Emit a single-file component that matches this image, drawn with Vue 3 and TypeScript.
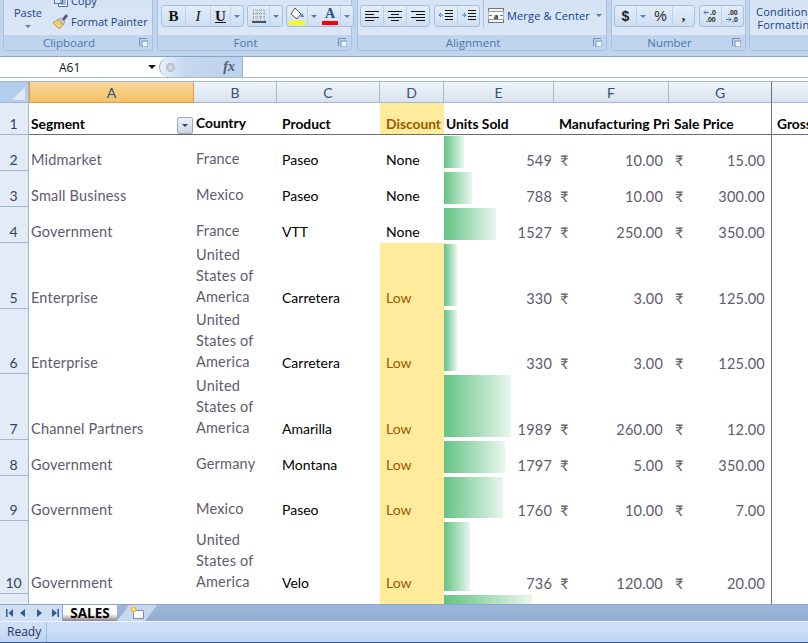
<template>
  <div class="sheet-app">
    <div class="ribbon">
      <section class="group clip">
        <div class="body clip-body">
          <div class="paste">
            <span>Paste</span>
            <i class="caret"></i>
          </div>
          <div class="clip-items">
            <div class="clip-item copy">
              <svg width="16" height="14" viewBox="0 0 16 14">
                <rect x="5.5" y="1.5" width="9" height="11" fill="#fff" stroke="#4a78b5" />
                <rect x="1.5" y="0.5" width="8" height="9" fill="#dfe9f7" stroke="#4a78b5" />
                <path d="M7 6h6M7 8h6M7 10h6" stroke="#4a78b5" />
              </svg>
              <span>Copy</span>
            </div>
            <div class="clip-item">
              <svg width="17" height="17" viewBox="0 0 17 17">
                <path d="M10 6l4-5 2 2-4 5z" fill="#5d4d8f" />
                <path d="M9 5l4 4-2 3-5-5z" fill="#c9c9c9" stroke="#777" stroke-width="0.5" />
                <path d="M6 6.500l5 5-3 4c-2.500-.5-6-4-7-6z" fill="#f3d06a" stroke="#8f7430" stroke-width="0.6" />
              </svg>
              <span>Format Painter</span>
            </div>
          </div>
        </div>
        <footer>Clipboard<Launcher /></footer>
      </section>

      <section class="group font">
        <div class="body tools">
          <div class="btns">
            <b class="tb serif w23">B</b>
            <i class="tb serif w24">I</i>
            <u class="tb serif w19 bold">U</u>
            <span class="tb drop"><i class="caret"></i></span>
          </div>
          <div class="btns">
            <span class="tb w21">
              <svg width="14" height="14" viewBox="0 0 14 14">
                <path d="M1 1h12M1 4.500h12M1 8h12M1.500 1v11M5 1v11M8.500 1v11M12.500 1v11" stroke="#9a9a9a" stroke-dasharray="1 1" />
                <path d="M0 13h14" stroke="#222" stroke-width="1.500" />
              </svg>
            </span>
            <span class="tb drop"><i class="caret"></i></span>
          </div>
          <div class="btns">
            <span class="tb w20">
              <svg width="16" height="19" viewBox="0 0 16 19">
                <path d="M6 1l6 6-4 5-6-5z" fill="#fff" stroke="#555" />
                <path d="M13 6l2 4h-3z" fill="#3f6fb5" />
                <rect y="14" width="16" height="4" fill="#ffff00" />
              </svg>
            </span>
            <span class="tb drop"><i class="caret"></i></span>
            <span class="tb w20 color-a">
              <b class="serif">A</b>
              <em class="bar"></em>
            </span>
            <span class="tb drop"><i class="caret"></i></span>
          </div>
        </div>
        <footer>Font<Launcher /></footer>
      </section>

      <section class="group align">
        <div class="body tools">
          <div class="btns">
            <span v-for="a in alignIcons" :key="a" class="tb w22">
              <svg width="16" height="12" viewBox="0 0 16 12">
                <path :d="a" stroke="#111" />
              </svg>
            </span>
          </div>
          <div class="btns second">
            <span class="tb w22">
              <svg width="16" height="14" viewBox="0 0 16 14">
                <path d="M7 1.500h8M7 4.500h8M7 7.500h8M7 10.500h8" stroke="#111" />
                <path d="M5 6H1M3 4L1 6l2 2" stroke="#3f78c4" fill="none" />
              </svg>
            </span>
            <span class="tb w21">
              <svg width="16" height="14" viewBox="0 0 16 14">
                <path d="M7 1.500h8M7 4.500h8M7 7.500h8M7 10.500h8" stroke="#111" />
                <path d="M1 6h4M3 4l2 2-2 2" stroke="#3f78c4" fill="none" />
              </svg>
            </span>
          </div>
          <div class="sep"></div>
          <div class="merge">
            <svg width="16" height="15" viewBox="0 0 16 15">
              <rect x="0.500" y="0.500" width="15" height="14" fill="#f4f4f4" stroke="#777" />
              <path d="M0 3.500h16M0 11.500h16" stroke="#999" />
              <rect x="0.500" y="4" width="15" height="7" fill="#fff" />
              <text x="8" y="10.500" text-anchor="middle" class="merge-a">a</text>
              <path d="M1 7.500h3M12 7.500h3" stroke="#3f78c4" />
            </svg>
            <span>Merge &amp; Center</span>
            <i class="caret"></i>
          </div>
        </div>
        <footer>Alignment<Launcher /></footer>
      </section>

      <section class="group number">
        <div class="body tools">
          <div class="btns">
            <b class="tb w21 sym sans">$</b>
            <span class="tb drop"><i class="caret"></i></span>
            <span class="tb w23 sym sans">%</span>
            <b class="tb serif w21 sym">,</b>
          </div>
          <div class="btns second">
            <span class="tb w21 dec">
              <svg width="16" height="14" viewBox="0 0 16 14">
                <path d="M1 3.500h5M3 1.500l-2 2 2 2" stroke="#3f78c4" fill="none" />
                <text x="7" y="6" class="dec-t">.0</text>
                <text x="3" y="13" class="dec-t">.00</text>
              </svg>
            </span>
            <span class="tb w21 dec">
              <svg width="16" height="14" viewBox="0 0 16 14">
                <text x="3" y="6" class="dec-t">.00</text>
                <path d="M1 10.500h5M4 8.500l2 2-2 2" stroke="#3f78c4" fill="none" />
                <text x="7" y="13" class="dec-t">.0</text>
              </svg>
            </span>
          </div>
        </div>
        <footer>Number<Launcher /></footer>
      </section>

      <section class="group styles">
        <div class="body styles-body">
          <span>Conditional</span>
          <span>Formatting</span>
        </div>
        <footer></footer>
      </section>
    </div>

    <div class="formula">
      <div class="name-box">
        <span>A61</span>
        <i class="name-caret"></i>
      </div>
      <div class="fx-box">
        <i class="knob"></i>
        <em>fx</em>
      </div>
      <div class="formula-input"></div>
    </div>

    <div class="grid">
      <div class="row col-head">
        <div class="corner"><i></i></div>
        <div
          v-for="c in columns"
          :key="c"
          class="col-label"
          :class="{ active: c === 'A', last: c === 'G', blank: c === '' }"
        >{{ c }}</div>
      </div>

      <div class="row head-row">
        <div class="row-num">1</div>
        <div class="cell pad2">Segment<span class="filter"><i class="caret dark"></i></span></div>
        <div class="cell pad2 up">Country</div>
        <div class="cell pad5">Product</div>
        <div class="cell pad6 warn">Discount</div>
        <div class="cell pad2">Units Sold</div>
        <div class="cell pad5">Manufacturing Price</div>
        <div class="cell pad5 last">Sale Price</div>
        <div class="cell pad5">Gross Sales</div>
      </div>

      <div
        v-for="(r, i) in rows"
        :key="i"
        class="row"
        :style="{ height: r.h + 'px' }"
      >
        <div class="row-num">{{ i + 2 }}</div>
        <div class="cell lift pad2 grey">{{ r.segment }}</div>
        <div class="cell pad2 grey up wrap">{{ r.country }}</div>
        <div class="cell lift pad5">{{ r.product }}</div>
        <div class="cell lift pad6" :class="{ warn: r.discount === 'Low' }">{{ r.discount }}</div>
        <div class="cell units grey" :style="{ backgroundSize: r.bar + 'px calc(100% - 4px)' }">{{ r.units }}</div>
        <div class="cell money grey"><template v-if="r.mfg"><span>₹</span><span>{{ r.mfg }}</span></template></div>
        <div class="cell money grey last"><template v-if="r.sale"><span>₹</span><span>{{ r.sale }}</span></template></div>
        <div class="cell"></div>
      </div>
    </div>

    <div class="tabs">
      <div class="nav">
        <svg width="60" height="10" viewBox="0 0 60 10" fill="#2b5b94">
          <path d="M6 1h1.500v8H6zM13 1v8L8.500 5zM25 1v8l-5-4zM37 1v8l5-4zM52 1v8l5-4zM57.500 1H59v8h-1.500z" />
        </svg>
      </div>
      <div class="tab-on">SALES</div>
      <div class="tab-new">
        <svg width="16" height="14" viewBox="0 0 16 14">
          <path d="M4.500 4.500h10v8h-10z" fill="#fff" stroke="#7b8da5" />
          <circle cx="4.500" cy="3.500" r="3" fill="#f4b942" />
          <circle cx="4.500" cy="3.500" r="1.200" fill="#fff6d0" />
        </svg>
      </div>
    </div>

    <div class="status"><span>Ready</span></div>
  </div>
</template>

<script setup lang="ts">
import { h } from 'vue'

interface SaleRow {
  h: number
  segment: string
  country: string
  product: string
  discount: string
  units: string
  bar: number
  mfg: string
  sale: string
}

const USA = 'United\nStates of\nAmerica'

const Launcher = () =>
  h('svg', { class: 'launcher', width: 9, height: 9, viewBox: '0 0 9 9' }, [
    h('path', { d: 'M0.500 8V0.500H8', stroke: '#6d8fbd', fill: 'none' }),
    h('rect', { x: 3, y: 3, width: 6, height: 6, fill: '#eef4fb', stroke: '#6d8fbd' })
  ])

const alignIcons = [
  'M1 1.500h14M1 4.500h9M1 7.500h14M1 10.500h9',
  'M1 1.500h14M4 4.500h8M1 7.500h14M4 10.500h8',
  'M1 1.500h14M6 4.500h9M1 7.500h14M6 10.500h9'
]

const columns = ['A', 'B', 'C', 'D', 'E', 'F', 'G', '']

const rows: SaleRow[] = [
  { h: 36, segment: 'Midmarket', country: 'France', product: 'Paseo', discount: 'None', units: '549', bar: 20, mfg: '10.00', sale: '15.00' },
  { h: 36, segment: 'Small Business', country: 'Mexico', product: 'Paseo', discount: 'None', units: '788', bar: 28, mfg: '10.00', sale: '300.00' },
  { h: 36, segment: 'Government', country: 'France', product: 'VTT', discount: 'None', units: '1527', bar: 52, mfg: '250.00', sale: '350.00' },
  { h: 66, segment: 'Enterprise', country: USA, product: 'Carretera', discount: 'Low', units: '330', bar: 13, mfg: '3.00', sale: '125.00' },
  { h: 65, segment: 'Enterprise', country: USA, product: 'Carretera', discount: 'Low', units: '330', bar: 13, mfg: '3.00', sale: '125.00' },
  { h: 66, segment: 'Channel Partners', country: USA, product: 'Amarilla', discount: 'Low', units: '1989', bar: 67, mfg: '260.00', sale: '12.00' },
  { h: 36, segment: 'Government', country: 'Germany', product: 'Montana', discount: 'Low', units: '1797', bar: 61, mfg: '5.00', sale: '350.00' },
  { h: 45, segment: 'Government', country: 'Mexico', product: 'Paseo', discount: 'Low', units: '1760', bar: 59, mfg: '10.00', sale: '7.00' },
  { h: 73, segment: 'Government', country: USA, product: 'Velo', discount: 'Low', units: '736', bar: 26, mfg: '120.00', sale: '20.00' },
  { h: 40, segment: '', country: '', product: '', discount: 'Low', units: '', bar: 88, mfg: '', sale: '' }
]
</script>

<style scoped>
.sheet-app {
  width: 808px;
  height: 643px;
  display: flex;
  flex-direction: column;
  overflow: hidden;
  background: #fff;
  font-family: "Lato", "Noto Sans", sans-serif;
}

/* ribbon */
.ribbon {
  height: 57px;
  flex-shrink: 0;
  display: flex;
  align-items: flex-start;
  gap: 4px;
  padding: 0 0 0 3px;
  box-sizing: border-box;
  background: #bfd5ee;
  border-bottom: 1px solid #86a5cc;
  overflow: hidden;
  font-family: "Open Sans", "Noto Sans", sans-serif;
  font-size: 11px;
  color: #15428b;
}
.group {
  height: 51px;
  flex-shrink: 0;
  display: flex;
  flex-direction: column;
  box-sizing: border-box;
  border: 1px solid #a6c1e0;
  border-top: 0;
  border-radius: 0 0 3px 3px;
}
.clip { width: 150px; }
.font { width: 195px; }
.align { width: 250px; margin-left: 1px; }
.number { width: 135px; }
.styles { width: 80px; margin-left: -1px; }
.body {
  height: 35px;
  flex-shrink: 0;
  background: linear-gradient(#d5e3f5, #dbe7f6);
}
footer {
  flex: 1;
  display: flex;
  align-items: center;
  justify-content: center;
  position: relative;
  padding-right: 18px;
  background: #c0d5ed;
  color: #4b74ad;
  font-size: 11.5px;
}
.launcher {
  position: absolute;
  right: 4px;
  top: 3px;
}
.caret {
  display: inline-block;
  width: 0;
  height: 0;
  border: 3px solid transparent;
  border-top: 3px solid #5b7ba8;
  border-bottom: 0;
}
.caret.dark { border-top-color: #27427a; }

.clip-body {
  display: flex;
  padding-left: 9px;
}
.paste {
  width: 30px;
  display: flex;
  flex-direction: column;
  align-items: center;
  gap: 5px;
  padding-top: 5px;
}
.clip-items {
  display: flex;
  flex-direction: column;
  margin-left: 9px;
  margin-top: -8px;
  gap: 4px;
}
.clip-item {
  display: flex;
  align-items: center;
  gap: 2px;
  height: 17px;
  white-space: nowrap;
}
.clip-item.copy { padding-left: 1px; }

.tools {
  display: flex;
  align-items: flex-start;
  gap: 3px;
  padding: 5px 0 0 3px;
  box-sizing: border-box;
}
.align .tools,
.number .tools { padding-left: 2px; }
.second { margin-left: 1px; }
.btns {
  display: flex;
  height: 22px;
  box-sizing: border-box;
  border: 1px solid #a6bfdf;
  border-radius: 3px;
  background: linear-gradient(#e3edf9, #cddef2);
}
.tb {
  height: 20px;
  display: flex;
  align-items: center;
  justify-content: center;
  flex-shrink: 0;
  border-right: 1px solid #bfd2e9;
  color: #111;
  font-style: normal;
  text-decoration: none;
  font-size: 15px;
}
.tb:last-child { border-right: 0; }
.serif { font-family: "Liberation Serif", serif; }
.sans { font-family: "Liberation Sans", sans-serif; }
.bold { font-weight: 700; text-decoration: underline; }
.w19 { width: 19px; }
.w20 { width: 20px; }
.w21 { width: 21px; }
.w22 { width: 22px; }
.w23 { width: 23px; }
.w24 { width: 24px; }
i.tb { font-style: italic; }
.drop { width: 12px; border-right: 0; }
.color-a {
  flex-direction: column;
  gap: 0;
  color: #2c4f86;
  font-size: 14px;
  line-height: 14px;
}
.color-a .bar {
  width: 16px;
  height: 4px;
  background: #f00;
}
.sep {
  width: 1px;
  height: 27px;
  margin-top: -5px;
  background: #a9c2e0;
}
.merge {
  display: flex;
  align-items: center;
  gap: 3px;
  height: 21px;
  margin-left: 1px;
  white-space: nowrap;
  letter-spacing: 0.15px;
}
.merge .caret { margin-left: 3px; }
.merge-a {
  font-family: "Liberation Serif", serif;
  font-size: 9px;
  font-weight: 700;
  fill: #111;
}
.sym { font-size: 14px; color: #222; }
.dec-t {
  font-family: "Liberation Sans", sans-serif;
  font-size: 7px;
  font-weight: 700;
  fill: #222;
}
.styles-body {
  display: flex;
  flex-direction: column;
  align-items: center;
  padding: 5px 5px 0 0;
  box-sizing: border-box;
  white-space: nowrap;
  line-height: 13px;
  letter-spacing: 0.2px;
}

/* formula bar */
.formula {
  height: 21px;
  flex-shrink: 0;
  display: flex;
  box-sizing: border-box;
  background: #fff;
  border-bottom: 1px solid #a9b9cc;
}
.name-box {
  width: 159px;
  display: flex;
  align-items: center;
  padding-left: 59px;
  box-sizing: border-box;
  font-family: "Open Sans", sans-serif;
  font-size: 12px;
  color: #111;
}
.name-caret {
  margin-left: 68px;
  border: 4px solid transparent;
  border-top: 4px solid #111;
  border-bottom: 0;
}
.fx-box {
  width: 84px;
  display: flex;
  align-items: center;
  justify-content: space-between;
  padding: 0 7px 0 6px;
  box-sizing: border-box;
  background: linear-gradient(90deg, #e9f0f9, #c5d8ef 30%, #bcd2ec);
  border-radius: 11px 0 0 11px;
  border-left: 1px solid #8fa9cb;
  border-right: 1px solid #9db5d2;
}
.knob {
  width: 9px;
  height: 9px;
  border-radius: 50%;
  background: radial-gradient(#dfe3e8, #9fa8b5);
}
.fx-box em {
  font-family: "Liberation Serif", serif;
  font-size: 14px;
  font-weight: 700;
  color: #555f6f;
}
.formula-input { flex: 1; }

/* sheet */
.grid {
  flex: 1;
  min-height: 0;
  overflow: hidden;
  padding-top: 3px;
  font-size: 14px;
  color: #000;
}
.row {
  display: grid;
  grid-template-columns: 29px 165px 83px 103px 64px 110px 115px 103px 1fr;
}
.col-head {
  height: 22px;
  border-top: 1px solid #9fb4cd;
  box-sizing: border-box;
}
.corner {
  background: #b4cfee;
  border-right: 1px solid #9eb6ce;
  border-bottom: 1px solid #9eb6ce;
  position: relative;
  overflow: hidden;
}
.corner i {
  position: absolute;
  right: 3px;
  bottom: 2px;
  border-style: solid;
  border-width: 0 0 13px 13px;
  border-color: transparent transparent #dfe9f5 transparent;
}
.col-label {
  display: flex;
  align-items: center;
  justify-content: center;
  box-sizing: border-box;
  padding-top: 1px;
  background: linear-gradient(#eff4fa, #d8e3f0);
  border-right: 1px solid #a5b9d1;
  border-bottom: 1px solid #9eb6ce;
  font-size: 14px;
  color: #37516e;
}
.col-label.active {
  background: linear-gradient(#f9d99f, #f2c164);
  border-right: 1px solid #f29536;
  border-bottom: 1px solid #f29536;
  border-left: 1px solid #f29536;
}
.col-label.last { border-right-color: #6e6e6e; }
.col-label.blank { border-right: 0; }

.row-num {
  display: flex;
  align-items: flex-end;
  justify-content: center;
  line-height: 21px;
  box-sizing: border-box;
  padding-right: 1px;
  background: #e3ebf6;
  border-right: 1px solid #9eb6ce;
  border-bottom: 1px solid #9eb6ce;
  font-size: 14px;
  color: #2d4663;
}
.cell {
  display: flex;
  align-items: flex-end;
  min-width: 0;
  overflow: hidden;
  box-sizing: border-box;
  line-height: 21px;
  white-space: nowrap;
}
.last { border-right: 1px solid #6e6e6e; }
.pad2 { padding-left: 2px; }
.pad5 { padding-left: 5px; }
.pad6 { padding-left: 6px; }
.grey {
  color: #5f5a6e;
  font-size: 14.5px;
  letter-spacing: 0.2px;
}
.lift { padding-bottom: 1px; }
.up { padding-bottom: 2px; }
.wrap { white-space: pre-line; }
.warn {
  background: #ffeb9c;
  color: #9c5700;
}
.head-row {
  height: 32px;
}
.head-row .cell {
  font-weight: 700;
  border-bottom: 1px solid #6e6e6e;
  line-height: 20px;
  font-size: 13.8px;
}
.head-row .up { padding-bottom: 1px; }
.filter {
  margin-left: auto;
  margin-right: 1px;
  width: 16px;
  height: 17px;
  display: flex;
  align-items: center;
  justify-content: center;
  box-sizing: border-box;
  border: 1px solid #a0a8b8;
  border-radius: 2px;
  background: linear-gradient(#eef2f8, #cdd6e4);
}
.units {
  justify-content: flex-end;
  padding-right: 2px;
  background-image: linear-gradient(90deg, #63c384, #e9f6ee);
  background-repeat: no-repeat;
  background-position: 0 1px;
}
.money {
  justify-content: space-between;
  padding: 0 6px;
}

/* bottom bars */
.tabs {
  height: 17px;
  flex-shrink: 0;
  display: flex;
  background: linear-gradient(#9db6d9, #93add2);
  border-top: 1px solid #8aa6cc;
  box-sizing: border-box;
}
.nav {
  width: 63px;
  display: flex;
  align-items: center;
  box-sizing: border-box;
  background: #cfe0f4;
  border-right: 1px solid #88a7cd;
}
.tab-on {
  width: 54px;
  display: flex;
  align-items: center;
  justify-content: center;
  background: linear-gradient(#fff 55%, #8d7f86);
  font-family: "Open Sans", sans-serif;
  font-size: 13.5px;
  font-weight: 700;
  color: #000;
}
.tab-new {
  width: 40px;
  display: flex;
  align-items: center;
  justify-content: center;
  background: #c8d9ef;
  clip-path: polygon(0 100%, 12px 0, 100% 0, calc(100% - 12px) 100%);
}
.status {
  height: 22px;
  flex-shrink: 0;
  box-sizing: border-box;
  display: flex;
  align-items: center;
  border-top: 1px solid #f2f7fd;
  border-bottom: 1px solid #3c5a87;
  background: linear-gradient(#cfe0f6 30%, #bdd4f1);
  font-family: "Open Sans", sans-serif;
  font-size: 12px;
  color: #2c2f6d;
}
.status span {
  width: 47px;
  height: 100%;
  display: flex;
  align-items: center;
  padding: 0 0 1px 7px;
  box-sizing: border-box;
  border-right: 1px solid #a5bcd8;
}
</style>
